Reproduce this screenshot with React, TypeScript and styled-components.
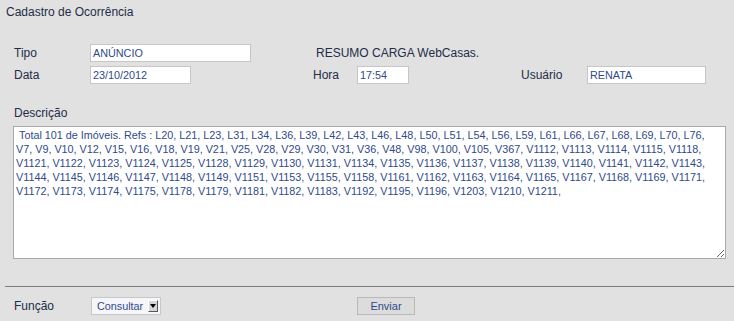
import React from "react";
import styled, { createGlobalStyle } from "styled-components";

const GlobalStyle = createGlobalStyle`
  html, body {
    margin: 0;
    padding: 0;
    background: #e1e1e1;
    font-family: "Liberation Sans", Arial, sans-serif;
    font-size: 12px;
    color: #242c48;
  }
`;

const Page = styled.div`
  width: 734px;
  height: 321px;
  background: #e1e1e1;
  overflow: hidden;
`;

const Title = styled.div`
  padding: 5px 6px 0;
  line-height: 14px;
`;

const FormGrid = styled.div`
  display: grid;
  grid-template-columns: 76px 223px 44px 164px 66px auto;
  grid-auto-rows: 18px;
  row-gap: 4px;
  align-items: center;
  padding-left: 14px;
  margin-top: 25px;
`;

const Label = styled.span`
  line-height: 14px;
`;

const Note = styled.span<{ $span?: number }>`
  grid-column: span ${(p) => p.$span ?? 1};
  padding-left: 3px;
`;

const Field = styled.div<{ $w: number }>`
  box-sizing: border-box;
  width: ${(p) => p.$w}px;
  height: 18px;
  background: #fff;
  border: 1px solid #c6c6c6;
  color: #2f4a8a;
  font-size: 10.8px;
  line-height: 16px;
  padding-left: 2px;
  white-space: nowrap;
  overflow: hidden;
`;

const Section = styled.div`
  padding: 22px 0 0 14px;
`;

const Memo = styled.textarea`
  display: block;
  box-sizing: border-box;
  margin: 6px 0 0 -1px;
  width: 713px;
  height: 133px;
  border: 1px solid #a9a9a9;
  background: #fff;
  color: #2f4a8a;
  font-family: "Liberation Sans", Arial, sans-serif;
  font-size: 10.8px;
  line-height: 14px;
  padding: 1px 2px;
  resize: both;
  outline: none;
`;

const Divider = styled.hr`
  margin: 27px 0 0 5px;
  border: none;
  border-top: 1px solid #7d7d7d;
  height: 0;
`;

const Footer = styled.div`
  display: grid;
  grid-template-columns: 77px 266px auto;
  align-items: center;
  padding: 10px 0 0 14px;
`;

const SelectBox = styled.div`
  box-sizing: border-box;
  width: 70px;
  height: 18px;
  background: #f5f5fa;
  border: 1px solid #c8c8c8;
  display: flex;
  align-items: center;
  justify-content: space-between;
  padding: 0 2px 0 5px;
  color: #2f4a8a;
  font-size: 10.8px;
`;

const ArrowBtn = styled.span`
  box-sizing: border-box;
  width: 10px;
  height: 12px;
  background: #d6d6d6;
  border-top: 1px solid #fff;
  border-left: 1px solid #fff;
  border-right: 1px solid #555;
  border-bottom: 1px solid #555;
  display: flex;
  align-items: center;
  justify-content: center;
  &::after {
    content: "";
    border-left: 3px solid transparent;
    border-right: 3px solid transparent;
    border-top: 4px solid #000;
  }
`;

const Button = styled.button`
  box-sizing: border-box;
  width: 58px;
  height: 18px;
  background: #dcdcdc;
  border: 1px solid #b9b9b9;
  color: #2f4a8a;
  font-family: "Liberation Sans", Arial, sans-serif;
  font-size: 11px;
  padding: 0;
  line-height: 16px;
`;

const refs =
  " Total 101 de Imóveis. Refs : L20, L21, L23, L31, L34, L36, L39, L42, L43, L46, L48, L50, L51, L54, L56, L59, L61, L66, L67, L68, L69, L70, L76, V7, V9, V10, V12, V15, V16, V18, V19, V21, V25, V28, V29, V30, V31, V36, V48, V98, V100, V105, V367, V1112, V1113, V1114, V1115, V1118, V1121, V1122, V1123, V1124, V1125, V1128, V1129, V1130, V1131, V1134, V1135, V1136, V1137, V1138, V1139, V1140, V1141, V1142, V1143, V1144, V1145, V1146, V1147, V1148, V1149, V1151, V1153, V1155, V1158, V1161, V1162, V1163, V1164, V1165, V1167, V1168, V1169, V1171, V1172, V1173, V1174, V1175, V1178, V1179, V1181, V1182, V1183, V1192, V1195, V1196, V1203, V1210, V1211,";

export default function App() {
  return (
    <Page>
      <GlobalStyle />
      <Title>Cadastro de Ocorrência</Title>
      <FormGrid>
        <Label>Tipo</Label>
        <Field $w={161}>ANÚNCIO</Field>
        <Note $span={4}>RESUMO CARGA WebCasas.</Note>
        <Label>Data</Label>
        <Field $w={101}>23/10/2012</Field>
        <Label>Hora</Label>
        <Field $w={52}>17:54</Field>
        <Label>Usuário</Label>
        <Field $w={119}>RENATA</Field>
      </FormGrid>
      <Section>
        <Label>Descrição</Label>
        <Memo readOnly defaultValue={refs} />
      </Section>
      <Divider />
      <Footer>
        <Label>Função</Label>
        <div>
          <SelectBox>
            Consultar
            <ArrowBtn />
          </SelectBox>
        </div>
        <div>
          <Button>Enviar</Button>
        </div>
      </Footer>
    </Page>
  );
}
